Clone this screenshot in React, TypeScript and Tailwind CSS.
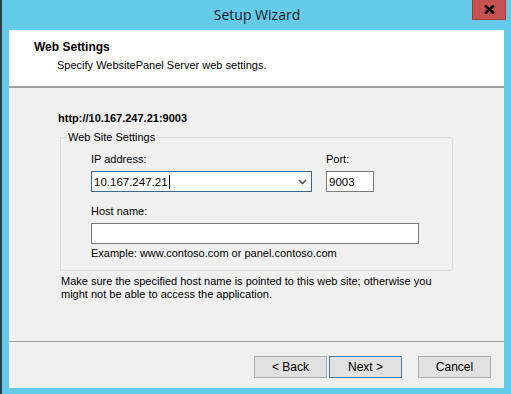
import React from 'react';

const font = { fontFamily: '"Liberation Sans", Arial, sans-serif' };

const Button = ({ label, primary }: { label: string; primary?: boolean }) => (
  <button
    className={`w-[73px] h-[22px] bg-[#e1e1e1] text-[12px] text-black border ${
      primary ? 'border-[#3c7fb1]' : 'border-[#adadad]'
    }`}
  >
    {label}
  </button>
);

const App = () => {
  return (
    <div
      className="w-[511px] h-[394px] bg-[#66caeb] border-l-2 border-[#2a3c46] flex flex-col overflow-hidden"
      style={font}
    >
      {/* Title bar */}
      <div className="h-[30px] relative flex items-center justify-center">
        <span
          className="text-[14px] text-[#1b1b1b] ml-[1px] mb-[1px]"
          style={{ fontFamily: '"Open Sans", "Liberation Sans", sans-serif' }}
        >
          Setup Wizard
        </span>
        <div className="absolute right-[5px] top-0 w-[34px] h-[20px] bg-[#c75050] border border-t-0 border-[#9e3d3d] flex items-center justify-center">
          <svg width="11" height="9" viewBox="0 0 11 9">
            <path d="M1 0.5 L10 8.5 M10 0.5 L1 8.5" stroke="#000" strokeWidth="2.6" />
          </svg>
        </div>
      </div>

      {/* Client area */}
      <div className="mx-[7px] mb-[6px] flex-1 bg-[#f0f0f0] flex flex-col">
        {/* Header */}
        <div className="h-[58px] bg-white border-b-2 border-[#a0a0a0] pl-[25px] pt-[10px]">
          <div className="text-[12px] font-bold text-black leading-[15px]">Web Settings</div>
          <div className="text-[11px] text-black pl-[23px] mt-[4px] leading-[13px]">
            Specify WebsitePanel Server web settings.
          </div>
        </div>

        {/* Body */}
        <div className="flex-1 pl-[51px] pt-[24px] text-[11px] text-black">
          <div className="font-bold text-[11px] leading-[13px] ml-[-2px]">http://10.167.247.21:9003</div>
          <fieldset className="mt-[6px] w-[393px] h-[140px] border border-[#d5dde3] rounded-[3px] px-0">
            <legend className="ml-[6px] px-[1px] leading-[13px]">Web Site Settings</legend>
            <div className="pl-[30px]">
              <div className="flex gap-[14px] mt-[9px]">
                <div className="flex flex-col">
                  <span className="leading-[13px] mb-[5px]">IP address:</span>
                  <div className="w-[221px] h-[21px] bg-white border border-[#3a6894] flex items-center pl-[2px] pr-[4px]">
                    <span className="text-[11.5px] leading-[14px]">10.167.247.21</span>
                    <span className="w-px h-[14px] bg-black ml-[1px]" />
                    <svg className="ml-auto" width="9" height="6" viewBox="0 0 9 6">
                      <path d="M1 1 L4.5 4.5 L8 1" fill="none" stroke="#555" strokeWidth="1.6" />
                    </svg>
                  </div>
                </div>
                <div className="flex flex-col">
                  <span className="leading-[13px] mb-[5px]">Port:</span>
                  <div className="w-[48px] h-[21px] bg-white border border-[#7a7a7a] flex items-center pl-[2px]">
                    <span className="text-[11.5px] leading-[14px]">9003</span>
                  </div>
                </div>
              </div>
              <div className="mt-[13px] flex flex-col">
                <span className="leading-[13px] mb-[5px]">Host name:</span>
                <div className="w-[328px] h-[21px] bg-white border border-[#7a7a7a]" />
                <span className="leading-[13px] mt-[3px]">Example: www.contoso.com or panel.contoso.com</span>
              </div>
            </div>
          </fieldset>
          <p className="mt-[4px] w-[400px] leading-[13px] ml-[1px]">
            Make sure the specified host name is pointed to this web site; otherwise you might not be
            able to access the application.
          </p>
        </div>

        {/* Footer */}
        <div className="h-[47px] border-t border-[#a0a0a0] flex items-start justify-end gap-[2px] pt-[14px] pr-[13px]">
          <Button label="< Back" />
          <Button label="Next >" primary />
          <div className="w-[12px]" />
          <Button label="Cancel" />
        </div>
      </div>
    </div>
  );
};

export default App;
